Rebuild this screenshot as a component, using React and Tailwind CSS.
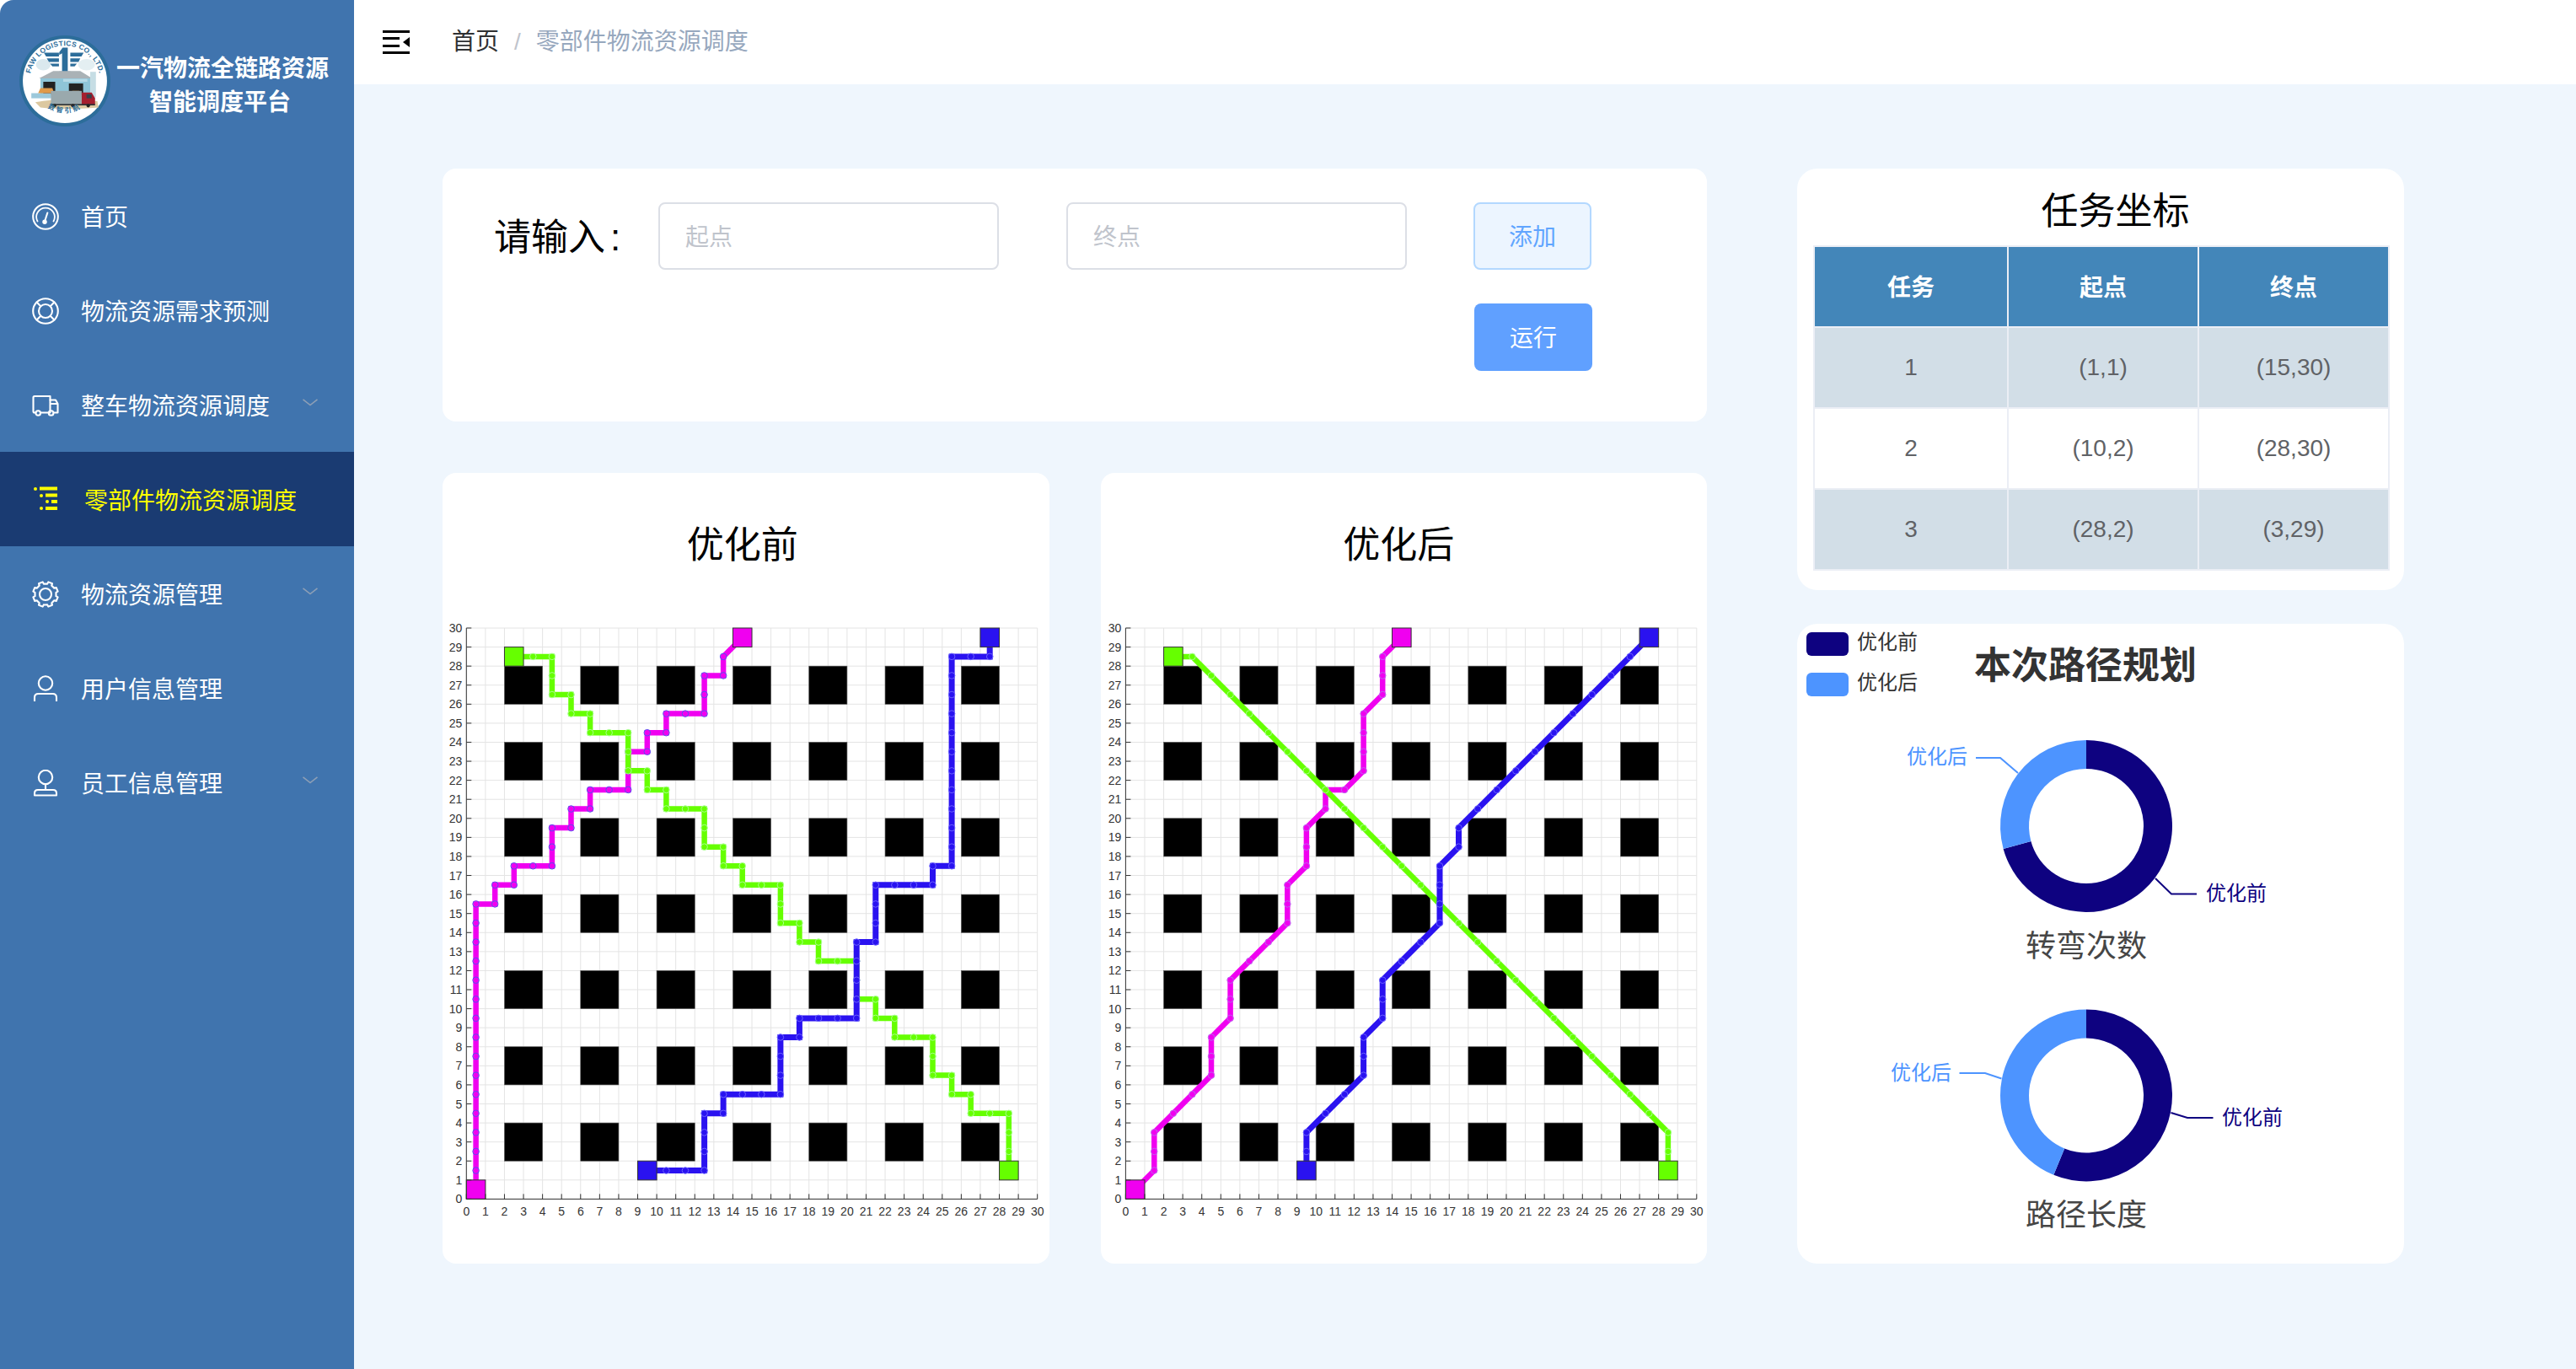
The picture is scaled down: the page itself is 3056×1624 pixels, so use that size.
import React from "react";

const S = { fill: "none", stroke: "#fff", strokeWidth: 2.1, strokeLinecap: "round", strokeLinejoin: "round" };

function IconOdometer() {
  return (
    <svg width="32" height="32" viewBox="0 0 32 32" {...S}>
      <circle cx="16" cy="16" r="14.8" />
      <path d="M6.5 21.5 A10.8 10.8 0 1 1 25.5 21.5" strokeWidth="1.8" />
      <path d="M15.6 20 L18.3 11.5" />
      <circle cx="15" cy="22.3" r="1.7" fill="#fff" />
    </svg>
  );
}
function IconHelp() {
  return (
    <svg width="32" height="32" viewBox="0 0 32 32" {...S}>
      <circle cx="16" cy="16" r="14.8" />
      <circle cx="16" cy="16" r="8" />
      <path d="M5.6 5.6 L10.3 10.3 M26.4 5.6 L21.7 10.3 M5.6 26.4 L10.3 21.7 M26.4 26.4 L21.7 21.7" />
    </svg>
  );
}
function IconTruck() {
  return (
    <svg width="32" height="32" viewBox="0 0 32 32" {...S}>
      <path d="M4.5 24.5 H3 Q1.5 24.5 1.5 23 V6.5 Q1.5 5 3 5 H21.5 V24.5" />
      <path d="M21.5 9.5 H28 L30.5 14 V24.5 H26" />
      <path d="M22 14 H30" />
      <path d="M10 24.5 H19" />
      <circle cx="7.2" cy="25" r="2.8" />
      <circle cx="22.6" cy="25" r="2.8" />
    </svg>
  );
}
function IconList() {
  return (
    <svg width="28" height="30" viewBox="0 0 28 30" fill="#ffff00">
      <circle cx="2" cy="3" r="2" />
      <rect x="7" y="0.5" width="21" height="4" />
      <circle cx="9" cy="11" r="2" />
      <rect x="14" y="8.5" width="14" height="4" />
      <circle cx="16" cy="18" r="2" />
      <rect x="21" y="16" width="7" height="4" />
      <circle cx="9" cy="26" r="2" />
      <rect x="14" y="24" width="14" height="4" />
    </svg>
  );
}
function gearPath() {
  const pts = [];
  const n = 8;
  for (let i = 0; i < n; i++) {
    const a = (i / n) * Math.PI * 2 + Math.PI / 8;
    const w = 0.2;
    const step = (Math.PI * 2) / n;
    [[a - step / 2 + w * 0.55, 12.6], [a - w * 1.1, 12.6], [a - w * 0.85, 15], [a + w * 0.85, 15], [a + w * 1.1, 12.6]].forEach(([t, r]) => {
      pts.push(`${(16 + Math.cos(t) * r).toFixed(2)} ${(16 + Math.sin(t) * r).toFixed(2)}`);
    });
  }
  return "M" + pts.join(" L") + " Z";
}
const GEAR = gearPath();
function IconGear() {
  return (
    <svg width="32" height="32" viewBox="0 0 32 32" {...S}>
      <path d={GEAR} />
      <circle cx="16" cy="16" r="7" />
    </svg>
  );
}
function IconUser() {
  return (
    <svg width="32" height="32" viewBox="0 0 32 32" {...S} strokeLinecap="butt">
      <circle cx="16" cy="9.5" r="8.2" />
      <path d="M3 31 V26.5 Q3 22 7.5 22 H24.5 Q29 22 29 26.5 V31" />
    </svg>
  );
}
function IconEmployee() {
  return (
    <svg width="32" height="32" viewBox="0 0 32 32" {...S}>
      <circle cx="16" cy="9" r="8.2" />
      <path d="M16 17 V24" />
      <path d="M3 30.5 V28 Q3 24 7 24 H25 Q29 24 29 28 V30.5 Z" />
    </svg>
  );
}

function Logo() {
  const c = "#2c6d9a";
  return (
    <svg width="108" height="108" viewBox="26 27 320 320" className="shrink-0">
      <defs>
        <path id="logoTop" d="M62 187 A124 124 0 0 1 310 187" />
        <path id="logoBot" d="M82 220 A108 108 0 0 0 290 220" />
      </defs>
      <circle cx="186" cy="187" r="160" fill={c} />
      <circle cx="186" cy="187" r="148" fill="#fff" />
      <text fontSize="25" fontWeight="700" fill={c} fontFamily="Liberation Sans" letterSpacing="1">
        <textPath href="#logoTop" startOffset="50%" textAnchor="middle">FAW LOGISTICS CO., LTD.</textPath>
      </text>
      <ellipse cx="110" cy="130" rx="26" ry="20" fill="#dbe9ee" />
      <ellipse cx="262" cy="130" rx="30" ry="20" fill="#e4eff2" />
      <path d="M112 88 H165 V101 H120 Z M122 108 H165 V120 H130 Z M134 126 H165 V136 H142 Z" fill={c} />
      <path d="M252 88 H205 V101 H244 Z M240 108 H205 V120 H234 Z M228 126 H205 V136 H220 Z" fill={c} />
      <path d="M178 70 H196 V154 H206 V160 H166 V154 H176 V90 L166 96 V86 Z" fill={c} />
      <rect x="100" y="175" width="175" height="70" fill="#8fc5d8" />
      <path d="M95 178 L145 152 H240 L282 178 Z" fill="#aab2b6" />
      <rect x="275" y="155" width="20" height="90" fill="#c6dde4" />
      <rect x="110" y="190" width="42" height="45" fill="#222" />
      <rect x="200" y="196" width="50" height="40" fill="#222" />
      <rect x="180" y="180" width="85" height="10" fill="#b5d9e6" />
      <rect x="68" y="230" width="70" height="18" fill="#9cc9db" />
      <path d="M92 230 L100 212 H142 L148 230 Z" fill="#e09a4a" />
      <path d="M205 235 L212 222 H236 L240 235 Z" fill="#d89a55" />
      <path d="M82 262 Q180 245 300 258 L304 280 Q180 290 100 280 Z" fill="#dcc8a0" />
      <rect x="137" y="222" width="108" height="47" fill="#9aa9ad" />
      <path d="M245 228 H280 L292 248 V270 H245 Z" fill="#a51f2f" />
      <rect x="262" y="234" width="18" height="14" fill="#36424c" />
      <rect x="137" y="268" width="155" height="5" fill="#2e3338" />
      <circle cx="150" cy="274" r="6" fill="#222" />
      <circle cx="214" cy="274" r="6" fill="#222" />
      <circle cx="268" cy="274" r="6" fill="#222" />
      <text fontSize="24" fontWeight="700" fill={c} letterSpacing="8">
        <textPath href="#logoBot" startOffset="50%" textAnchor="middle">数智引航</textPath>
      </text>
    </svg>
  );
}

const MENU = [
  { label: "首页", Icon: IconOdometer },
  { label: "物流资源需求预测", Icon: IconHelp },
  { label: "整车物流资源调度", Icon: IconTruck, arrow: true },
  { label: "零部件物流资源调度", Icon: IconList, active: true },
  { label: "物流资源管理", Icon: IconGear, arrow: true },
  { label: "用户信息管理", Icon: IconUser },
  { label: "员工信息管理", Icon: IconEmployee, arrow: true },
];

function Sidebar() {
  return (
    <aside className="w-[420px] shrink-0 bg-[#4074ae] rounded-tl-[16px] text-white">
      <div className="h-[200px] pt-[42px] pl-[23px] flex items-start">
        <Logo />
        <div className="ml-[7px] mt-[20px] w-[252px] text-center text-[28px] font-bold leading-[40px]">
          <div>一汽物流全链路资源</div>
          <div className="pr-[6px]">智能调度平台</div>
        </div>
      </div>
      {MENU.map(({ label, Icon, arrow, active }) => (
        <div
          key={label}
          className={
            active
              ? "h-[112px] bg-[#1a3b72] flex items-center pl-[40px] text-[#ffff00] text-[28px]"
              : "h-[112px] flex items-center pl-[38px] pt-[2px] text-[28px]"
          }
        >
          <Icon />
          <span className={active ? "ml-[32px] pt-[6px]" : "ml-[26px] pt-[4px]"}>{label}</span>
          {arrow && (
            <svg className="ml-auto mr-[43px] mb-[8px]" width="18" height="9" viewBox="0 0 18 9" fill="none" stroke="#8d9fb6" strokeWidth="1.6">
              <path d="M0.5 0.8 L9 7.6 L17.5 0.8" />
            </svg>
          )}
        </div>
      ))}
    </aside>
  );
}

function Header() {
  return (
    <header className="h-[100px] bg-white flex items-center pl-[34px] text-[28px]">
      <svg width="32" height="28" viewBox="0 0 32 28" fill="#000">
        <rect x="0" y="0" width="32" height="3" />
        <rect x="0" y="8" width="20" height="3" />
        <rect x="0" y="17" width="20" height="3" />
        <rect x="0" y="25" width="32" height="3" />
        <path d="M24 14 L32 8 V20 Z" />
      </svg>
      <span className="ml-[50px] text-[#303133]">首页</span>
      <span className="ml-[18px] text-[#c0c4cc]">/</span>
      <span className="ml-[18px] text-[#97a8be]">零部件物流资源调度</span>
    </header>
  );
}

const U = 22.58;
const TOP = 15;

const BEFORE = {
  m: [[0.5,0.5],[0.5,15.5],[1.5,15.5],[1.5,16.5],[2.5,16.5],[2.5,17.5],[4.5,17.5],[4.5,19.5],[5.5,19.5],[5.5,20.5],[6.5,20.5],[6.5,21.5],[8.5,21.5],[8.5,23.5],[9.5,23.5],[9.5,24.5],[10.5,24.5],[10.5,25.5],[12.5,25.5],[12.5,27.5],[13.5,27.5],[13.5,28.5],[14.5,29.5]],
  g: [[2.5,28.5],[4.5,28.5],[4.5,26.5],[5.5,26.5],[5.5,25.5],[6.5,25.5],[6.5,24.5],[8.5,24.5],[8.5,22.5],[9.5,22.5],[9.5,21.5],[10.5,21.5],[10.5,20.5],[12.5,20.5],[12.5,18.5],[13.5,18.5],[13.5,17.5],[14.5,17.5],[14.5,16.5],[16.5,16.5],[16.5,14.5],[17.5,14.5],[17.5,13.5],[18.5,13.5],[18.5,12.5],[20.5,12.5],[20.5,10.5],[21.5,10.5],[21.5,9.5],[22.5,9.5],[22.5,8.5],[24.5,8.5],[24.5,6.5],[25.5,6.5],[25.5,5.5],[26.5,5.5],[26.5,4.5],[28.5,4.5],[28.5,1.5]],
  b: [[9.5,1.5],[12.5,1.5],[12.5,4.5],[13.5,4.5],[13.5,5.5],[16.5,5.5],[16.5,8.5],[17.5,8.5],[17.5,9.5],[20.5,9.5],[20.5,13.5],[21.5,13.5],[21.5,16.5],[24.5,16.5],[24.5,17.5],[25.5,17.5],[25.5,28.5],[27.5,28.5],[27.5,29.5]],
};
const AFTER = {
  m: [[0.5,0.5],[1.5,1.5],[1.5,3.5],[4.5,6.5],[4.5,8.5],[5.5,9.5],[5.5,11.5],[8.5,14.5],[8.5,16.5],[9.5,17.5],[9.5,19.5],[10.5,20.5],[10.5,21.5],[11.5,21.5],[12.5,22.5],[12.5,25.5],[13.5,26.5],[13.5,28.5],[14.5,29.5]],
  g: [[2.5,28.5],[3.5,28.5],[28.5,3.5],[28.5,1.5]],
  b: [[9.5,1.5],[9.5,3.5],[12.5,6.5],[12.5,8.5],[13.5,9.5],[13.5,11.5],[16.5,14.5],[16.5,17.5],[17.5,18.5],[17.5,19.5],[27.5,29.5]],
};

function stepPoints(path) {
  const out = [];
  for (let i = 0; i < path.length - 1; i++) {
    const [ax, ay] = path[i];
    const [bx, by] = path[i + 1];
    const n = Math.round(Math.max(Math.abs(bx - ax), Math.abs(by - ay)));
    for (let k = i === 0 ? 1 : 0; k < n; k++) {
      out.push([ax + ((bx - ax) * k) / n, ay + ((by - ay) * k) / n]);
    }
  }
  return out;
}

const RANGE = Array.from({ length: 31 }, (_, i) => i);
const BLOCKS = [2, 6, 10, 14, 18, 22, 26];

function PathChart({ data, x0, markM, markG, markB }) {
  const X = (v) => x0 + v * U;
  const Y = (v) => TOP + (30 - v) * U;
  const line = (p) => p.map(([a, b]) => `${X(a).toFixed(1)},${Y(b).toFixed(1)}`).join(" ");
  const Square = ({ x, y, fill }) => (
    <rect x={X(x)} y={Y(y + 1)} width={U} height={U} fill={fill} stroke="#333" strokeWidth="1" />
  );
  const series = [
    { p: data.m, c: "#f000f0", w: 6.5, mark: markM },
    { p: data.g, c: "#66ff00", w: 6.5, mark: markG },
    { p: data.b, c: "#2a12f0", w: 7, mark: markB },
  ];
  return (
    <svg width="720" height="720" viewBox="0 0 720 720" className="block mt-[53px]" fontFamily="Liberation Sans">
      {RANGE.map((i) => (
        <g key={i} stroke="#e4e4e4" strokeWidth="1">
          <line x1={X(i)} x2={X(i)} y1={Y(0)} y2={Y(30)} />
          <line x1={X(0)} x2={X(30)} y1={Y(i)} y2={Y(i)} />
        </g>
      ))}
      {BLOCKS.map((a) =>
        BLOCKS.map((b) => (
          <rect key={`${a}-${b}`} x={X(a)} y={Y(b + 2)} width={2 * U} height={2 * U} fill="#000" stroke="#555" strokeWidth="0.6" />
        ))
      )}
      {series.map(({ p, c, w, mark }) => (
        <g key={c}>
          <polyline points={line(p)} fill="none" stroke={c} strokeWidth={w} strokeLinejoin="miter" />
          {stepPoints(p).map(([a, b], i) => (
            <circle key={i} cx={X(a)} cy={Y(b)} r="3.8" fill={c} fillOpacity="0.6" stroke={mark} strokeWidth="1" />
          ))}
        </g>
      ))}
      <Square x={0} y={0} fill="#f000f0" />
      <Square x={14} y={29} fill="#f000f0" />
      <Square x={2} y={28} fill="#66ff00" />
      <Square x={28} y={1} fill="#66ff00" />
      <Square x={9} y={1} fill="#2a12f0" />
      <Square x={27} y={29} fill="#2a12f0" />
      <line x1={X(0)} x2={X(0)} y1={Y(0)} y2={Y(30)} stroke="#333" strokeWidth="1" />
      <line x1={X(0)} x2={X(30)} y1={Y(0)} y2={Y(0)} stroke="#333" strokeWidth="1" />
      {RANGE.map((i) => (
        <g key={i}>
          <line x1={X(i)} x2={X(i)} y1={Y(0)} y2={Y(0) - 6} stroke="#333" strokeWidth="1" />
          <line x1={X(0)} x2={X(0) + 6} y1={Y(i)} y2={Y(i)} stroke="#333" strokeWidth="1" />
          <text x={X(i)} y={Y(0) + 20} fontSize="14" fill="#333" textAnchor="middle">{i}</text>
          <text x={X(0) - 5} y={Y(i) + 5} fontSize="14" fill="#333" textAnchor="end">{i}</text>
        </g>
      ))}
    </svg>
  );
}

function ChartCard({ title, data, x0, markM, markG, markB, titleOffset }) {
  return (
    <section className="w-[720px] h-[938px] bg-white rounded-[16px] pt-[56px] overflow-hidden">
      <h2 className={titleOffset}>{title}</h2>
      <PathChart data={data} x0={x0} markM={markM} markG={markG} markB={markB} />
    </section>
  );
}

function InputPanel() {
  return (
    <section className="h-[300px] bg-white rounded-[16px] pt-[40px] pl-[61px]">
      <div className="flex items-center">
        <span className="w-[195px] pt-[4px] text-[44px] text-black whitespace-nowrap">
          请输入<span className="ml-[6px]">:</span>
        </span>
        <input
          placeholder="起点"
          className="w-[404px] h-[80px] border-2 border-[#dcdfe6] rounded-[8px] pl-[30px] pt-[3px] text-[28px] bg-white outline-none placeholder:text-[#c0c4cc]"
        />
        <input
          placeholder="终点"
          className="ml-[80px] w-[404px] h-[80px] border-2 border-[#dcdfe6] rounded-[8px] pl-[30px] pt-[3px] text-[28px] bg-white outline-none placeholder:text-[#c0c4cc]"
        />
        <button className="ml-[79px] w-[140px] h-[80px] pt-[3px] border-2 border-[#b3d8ff] bg-[#ecf5ff] text-[#60a5ff] rounded-[8px] text-[28px]">添加</button>
      </div>
      <div className="mt-[40px] flex justify-end pr-[136px]">
        <button className="w-[140px] h-[80px] pt-[4px] bg-[#60a0ff] text-white rounded-[8px] text-[28px]">运行</button>
      </div>
    </section>
  );
}

const ROWS = [
  ["1", "(1,1)", "(15,30)"],
  ["2", "(10,2)", "(28,30)"],
  ["3", "(28,2)", "(3,29)"],
];

function TaskTable() {
  return (
    <section className="h-[500px] bg-white rounded-[24px] pt-[21px] pl-[19px] pr-[18px]">
      <h2 className="h-[60px] leading-[60px] pl-[34px] text-[44px] text-black text-center mb-[10px]">任务坐标</h2>
      <table className="w-[682px] table-fixed border-collapse text-[28px] text-center">
        <colgroup>
          <col className="w-[230px]" />
          <col className="w-[226px]" />
          <col className="w-[226px]" />
        </colgroup>
        <thead>
          <tr className="h-[96px] bg-[#4386b9] text-white font-bold">
            {["任务", "起点", "终点"].map((h) => (
              <th key={h} className="border-2 border-[#ebeef5] pt-[3px] font-bold">{h}</th>
            ))}
          </tr>
        </thead>
        <tbody>
          {ROWS.map((r, i) => (
            <tr key={r[0]} className={i % 2 === 0 ? "h-[96px] bg-[#d2dee7] text-[#606266]" : "h-[96px] bg-white text-[#606266]"}>
              {r.map((c) => (
                <td key={c} className="border-2 border-[#ebeef5] p-0">{c}</td>
              ))}
            </tr>
          ))}
        </tbody>
      </table>
    </section>
  );
}

const DARK = "#0e0280";
const LIGHT = "#4d94ff";

function arc(cx, cy, R, r, a0, a1) {
  const p = (rad, a) => {
    const t = ((a - 90) * Math.PI) / 180;
    return `${(cx + rad * Math.cos(t)).toFixed(2)} ${(cy + rad * Math.sin(t)).toFixed(2)}`;
  };
  const large = a1 - a0 > 180 ? 1 : 0;
  return `M${p(R, a0)} A${R} ${R} 0 ${large} 1 ${p(R, a1)} L${p(r, a1)} A${r} ${r} 0 ${large} 0 ${p(r, a0)} Z`;
}

function Donut({ cy, split }) {
  const cx = 2475;
  return (
    <g>
      <path d={arc(cx, cy, 102, 68, 0, split)} fill={DARK} />
      <path d={arc(cx, cy, 102, 68, split, 360)} fill={LIGHT} />
    </g>
  );
}

function RouteCard() {
  return (
    <section className="h-[759px] bg-white rounded-[24px] overflow-hidden">
      <svg width="720" height="759" viewBox="2132 740 720 759" className="block">
        <rect x="2143" y="750" width="50" height="28" rx="6" fill={DARK} />
        <rect x="2143" y="798" width="50" height="28" rx="6" fill={LIGHT} />
        <text x="2203" y="770" fontSize="24" fill="#333">优化前</text>
        <text x="2203" y="818" fontSize="24" fill="#333">优化后</text>
        <text x="2474" y="805" fontSize="44" fontWeight="700" fill="#333" textAnchor="middle">本次路径规划</text>

        <Donut cy={980} split={254.7} />
        <polyline points="2344,899 2373,899 2394,917" fill="none" stroke={LIGHT} strokeWidth="2" />
        <text x="2262" y="906" fontSize="24" fill={LIGHT}>优化后</text>
        <polyline points="2557,1042 2576,1060.5 2606,1060.5" fill="none" stroke={DARK} strokeWidth="2" />
        <text x="2617" y="1068" fontSize="24" fill={DARK}>优化前</text>
        <text x="2475" y="1135" fontSize="36" fill="#464646" textAnchor="middle">转弯次数</text>

        <Donut cy={1299.5} split={202.3} />
        <polyline points="2324.5,1273 2355,1273 2374.5,1279.5" fill="none" stroke={LIGHT} strokeWidth="2" />
        <text x="2243" y="1281" fontSize="24" fill={LIGHT}>优化后</text>
        <polyline points="2575.5,1320 2595,1326 2625.5,1326" fill="none" stroke={DARK} strokeWidth="2" />
        <text x="2636" y="1334" fontSize="24" fill={DARK}>优化前</text>
        <text x="2475" y="1454" fontSize="36" fill="#464646" textAnchor="middle">路径长度</text>
      </svg>
    </section>
  );
}

export default function App() {
  return (
    <div className="w-[3056px] h-[1624px] flex bg-white overflow-hidden font-['Liberation_Sans','Noto_Sans_CJK_SC',sans-serif]">
      <Sidebar />
      <main className="flex-1 flex flex-col bg-[#eff6fd]">
        <Header />
        <div className="pt-[100px] pl-[105px] flex gap-[107px]">
          <div className="w-[1500px] flex flex-col gap-[61px]">
            <InputPanel />
            <div className="flex gap-[61px]">
              <ChartCard title="优化前" data={BEFORE} x0={28.3} markM="#5a50f0" markG="#a8ff90" markB="#6a60ff" titleOffset="h-[60px] leading-[60px] text-[44px] text-black text-center pr-[8px]" />
              <ChartCard title="优化后" data={AFTER} x0={29.4} markM="#c060f0" markG="#a8ff90" markB="#6a60ff" titleOffset="h-[60px] leading-[60px] text-[44px] text-black text-center pr-[12px]" />
            </div>
          </div>
          <div className="w-[720px] flex flex-col gap-[40px]">
            <TaskTable />
            <RouteCard />
          </div>
        </div>
      </main>
    </div>
  );
}
